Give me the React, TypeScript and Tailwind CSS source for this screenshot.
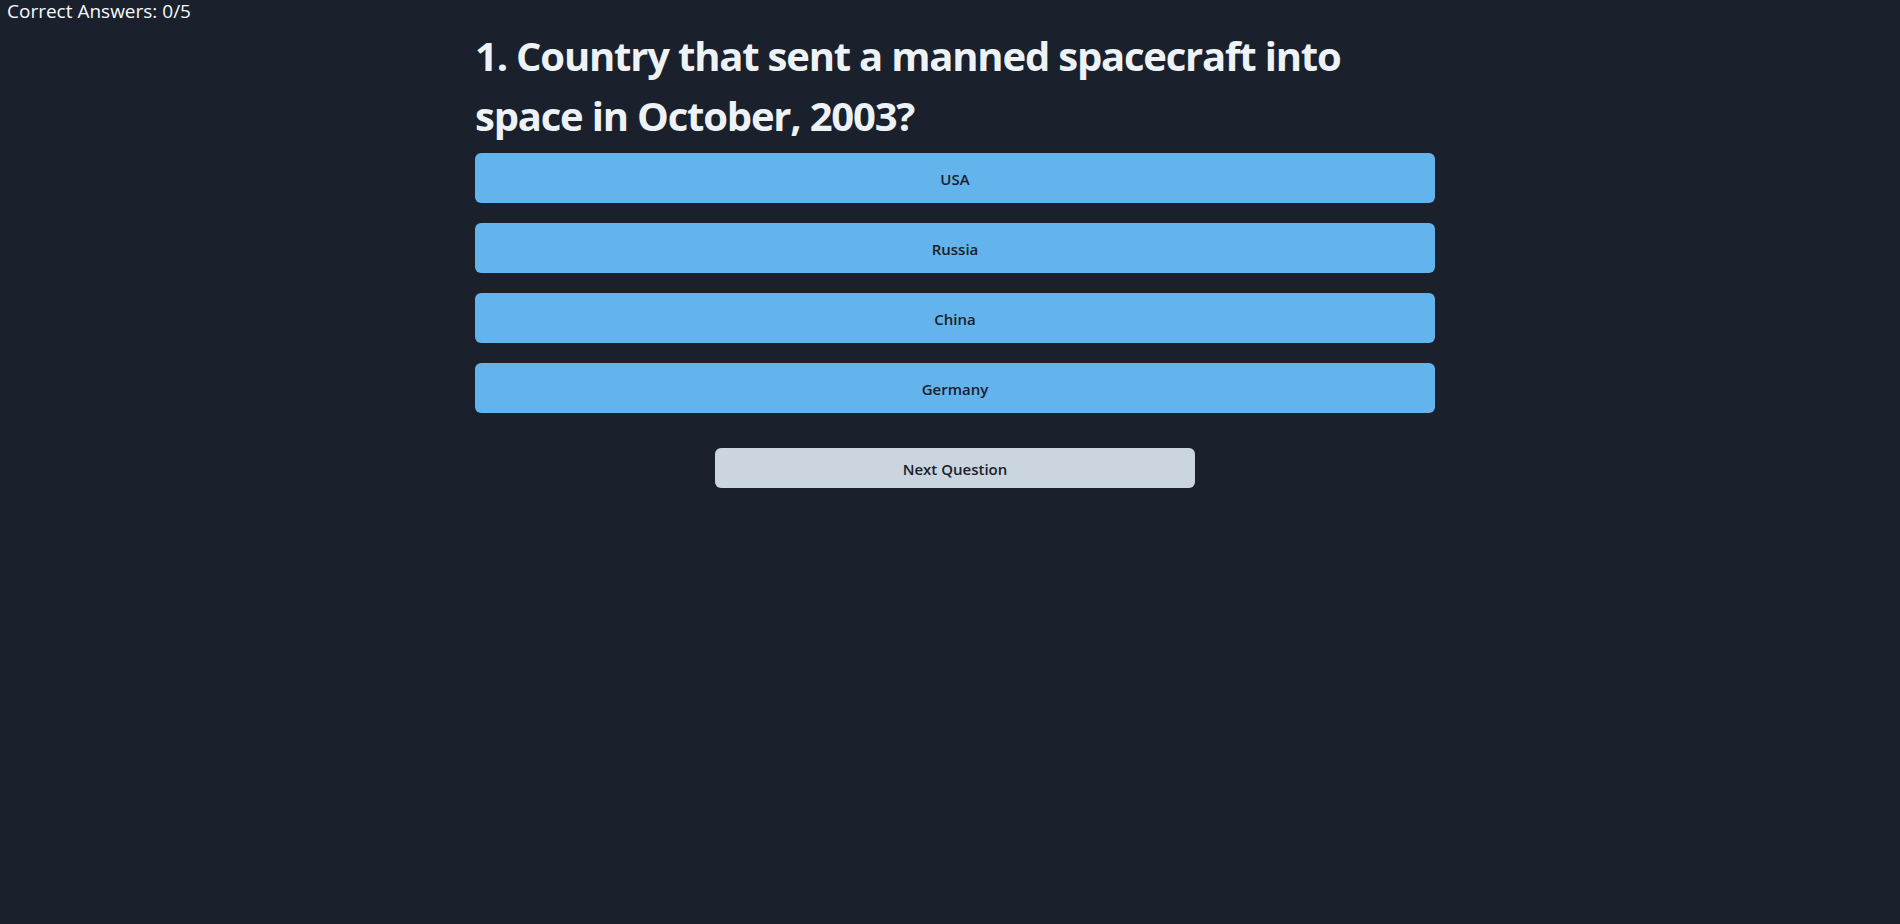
const answers = ['USA', 'Russia', 'China', 'Germany']

export default function App() {
  return (
    <div className="min-h-screen w-full bg-[#1a202c] font-['Open_Sans',sans-serif] text-[#edf2f7]">
      <div className="h-6 pl-[7px] text-[19px] leading-[22px] text-[#f7fafc]">Correct Answers: 0/5</div>
      <div className="flex justify-center pl-[10px]">
        <div className="flex w-[960px] flex-col">
          <h1 className="mt-[2px] mb-[7px] text-[40px] font-bold leading-[60px] tracking-[-1.2px] text-[#edf2f7]">
            1. Country that sent a manned spacecraft into space in October, 2003?
          </h1>
          <div className="flex flex-col gap-5">
            {answers.map((a) => (
              <button
                key={a}
                className="h-[50px] w-full rounded-md bg-[#63b3ed] pt-[2px] text-[15px] font-semibold text-[#1a202c]"
              >
                {a}
              </button>
            ))}
          </div>
          <div className="mt-[35px] flex justify-center">
            <button className="h-10 w-[480px] rounded-md bg-[#cbd5e0] pt-[2px] text-[15px] font-semibold text-[#1a202c]">
              Next Question
            </button>
          </div>
        </div>
      </div>
    </div>
  )
}
